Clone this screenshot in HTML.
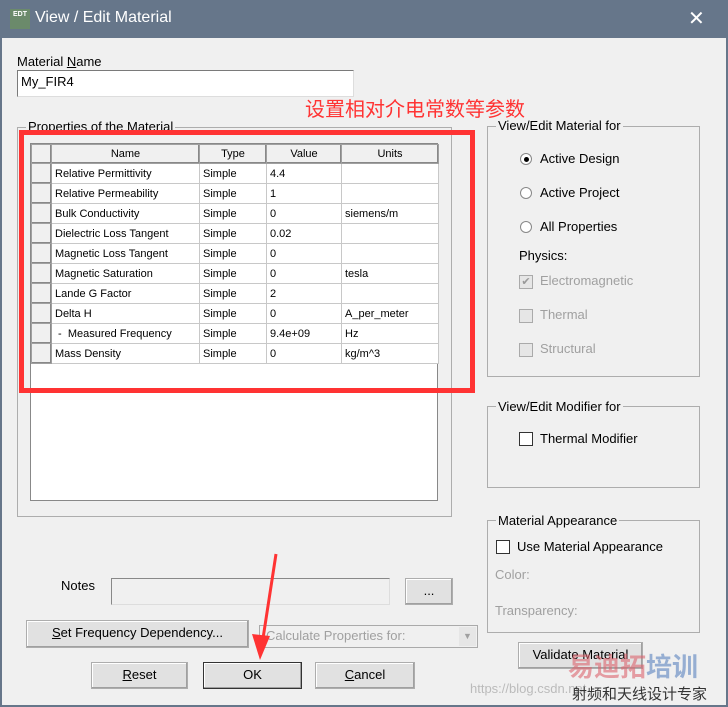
<!DOCTYPE html>
<html><head><meta charset="utf-8"><style>
*{box-sizing:border-box;margin:0;padding:0}
body{width:728px;height:707px;position:relative;background:#f0f0f0;font-family:"Liberation Sans","Noto Sans CJK SC",sans-serif;font-size:13px;color:#000;overflow:hidden}
.a{position:absolute}
#title{left:0;top:0;width:728px;height:38px;background:#66768a;color:#fff;font-size:16px}
#frame{left:0;top:38px;width:728px;height:669px;border:2px solid #66768a;border-top:none}
.grp{border:1px solid #adadad}
.lbl{background:#f0f0f0;padding:0 2px;white-space:nowrap}
.btn{background:#e1e1e1;border:1px solid #adadad;box-shadow:inset -1px -1px 0 #a0a0a0,inset 1px 1px 0 #fff;text-align:center;line-height:24px}
table{border-collapse:collapse;font-size:11px}
td{border:1px solid #c8c8c8;height:20px;padding:0 3px;background:#fff;white-space:nowrap}
th{font-weight:normal;background:#f0f0f0;border:1px solid #a0a0a0;box-shadow:inset -1px -1px 0 #888;height:19px}
td.s{background:#f0f0f0;border:1px solid #a0a0a0;box-shadow:inset -1px -1px 0 #888}
.rad{width:12px;height:12px;border:1px solid #888;border-radius:50%;background:#fff}
.chk{width:14px;height:14px;border:1px solid #333;background:#fff}
.dis{color:#a0a0a0}
</style></head><body>
<div id="title" class="a"><div class="a" style="left:10px;top:9px;width:20px;height:20px;background:#6b8a6b;color:#fff;font-size:7px;font-weight:bold;line-height:12px;text-align:center">EDT</div><div class="a" style="left:35px;top:9px">View / Edit Material</div>
<div class="a" style="left:688px;top:6px;font-size:20px">✕</div></div>
<div id="frame" class="a"></div>
<div class="a" style="left:17px;top:54px">Material <u>N</u>ame</div>
<div class="a" style="left:17px;top:70px;width:337px;height:27px;background:#fff;border:1px solid #7a7a7a;border-bottom-color:#ddd;border-right-color:#ddd;padding:3px 3px">My_FIR4</div>
<div class="a" style="left:305px;top:98px;color:#ff3333;font-size:20px;line-height:24px">设置相对介电常数等参数</div>
<div class="a grp" style="left:17px;top:127px;width:435px;height:390px"></div>
<div class="a lbl" style="left:26px;top:119px">Properties of the Material</div>
<div class="a" style="left:30px;top:143px;width:408px;height:358px;background:#fff;border:1px solid #888">
<table style="width:407px;table-layout:fixed">
<colgroup><col style="width:20px"><col style="width:148px"><col style="width:67px"><col style="width:75px"><col style="width:97px"></colgroup>
<tr><th></th><th>Name</th><th>Type</th><th>Value</th><th>Units</th></tr>
<tr><td class="s"></td><td>Relative Permittivity</td><td>Simple</td><td>4.4</td><td></td></tr>
<tr><td class="s"></td><td>Relative Permeability</td><td>Simple</td><td>1</td><td></td></tr>
<tr><td class="s"></td><td>Bulk Conductivity</td><td>Simple</td><td>0</td><td>siemens/m</td></tr>
<tr><td class="s"></td><td>Dielectric Loss Tangent</td><td>Simple</td><td>0.02</td><td></td></tr>
<tr><td class="s"></td><td>Magnetic Loss Tangent</td><td>Simple</td><td>0</td><td></td></tr>
<tr><td class="s"></td><td>Magnetic Saturation</td><td>Simple</td><td>0</td><td>tesla</td></tr>
<tr><td class="s"></td><td>Lande G Factor</td><td>Simple</td><td>2</td><td></td></tr>
<tr><td class="s"></td><td>Delta H</td><td>Simple</td><td>0</td><td>A_per_meter</td></tr>
<tr><td class="s"></td><td>&nbsp;-&nbsp; Measured Frequency</td><td>Simple</td><td>9.4e+09</td><td>Hz</td></tr>
<tr><td class="s"></td><td>Mass Density</td><td>Simple</td><td>0</td><td>kg/m^3</td></tr>
</table></div>
<div class="a" style="left:19px;top:130px;width:456px;height:263px;border:5px solid #ff3333"></div>

<div class="a grp" style="left:487px;top:126px;width:213px;height:251px"></div>
<div class="a lbl" style="left:496px;top:118px">View/Edit Material for</div>
<div class="a rad" style="left:520px;top:153px"><div class="a" style="left:3px;top:3px;width:5px;height:5px;border-radius:50%;background:#000"></div></div>
<div class="a" style="left:540px;top:151px">Active Design</div>
<div class="a rad" style="left:520px;top:187px"></div><div class="a" style="left:540px;top:185px">Active Project</div>
<div class="a rad" style="left:520px;top:221px"></div><div class="a" style="left:540px;top:219px">All Properties</div>
<div class="a" style="left:519px;top:248px">Physics:</div>
<div class="a chk" style="left:519px;top:275px;border-color:#aaa;background:#e6e6e6;color:#999;font-size:11px;line-height:12px;text-align:center">✔</div><div class="a dis" style="left:540px;top:273px">Electromagnetic</div>
<div class="a chk" style="left:519px;top:309px;border-color:#aaa;background:#e6e6e6"></div><div class="a dis" style="left:540px;top:307px">Thermal</div>
<div class="a chk" style="left:519px;top:343px;border-color:#aaa;background:#e6e6e6"></div><div class="a dis" style="left:540px;top:341px">Structural</div>

<div class="a grp" style="left:487px;top:406px;width:213px;height:82px"></div>
<div class="a lbl" style="left:496px;top:399px">View/Edit Modifier for</div>
<div class="a chk" style="left:519px;top:432px"></div><div class="a" style="left:540px;top:431px">Thermal Modifier</div>

<div class="a grp" style="left:487px;top:520px;width:213px;height:113px"></div>
<div class="a lbl" style="left:496px;top:513px">Material Appearance</div>
<div class="a chk" style="left:496px;top:540px"></div><div class="a" style="left:517px;top:539px">Use Material Appearance</div>
<div class="a dis" style="left:495px;top:567px">Color:</div>
<div class="a dis" style="left:495px;top:603px">Transparency:</div>

<div class="a" style="left:61px;top:578px">Notes</div>
<div class="a" style="left:111px;top:578px;width:279px;height:27px;border:1px solid #888;border-bottom-color:#ddd;border-right-color:#ddd"></div>
<div class="a btn" style="left:405px;top:578px;width:48px;height:27px">...</div>
<div class="a btn" style="left:26px;top:620px;width:223px;height:28px"><u>S</u>et Frequency Dependency...</div>
<div class="a" style="left:259px;top:625px;width:219px;height:23px;border:1px solid #aaa;color:#a0a0a0;padding:2px 6px">Calculate Properties for:<div class="a" style="right:1px;top:1px;width:17px;height:19px;background:#e6e6e6;font-size:9px;text-align:center;line-height:19px">▼</div></div>
<div class="a btn" style="left:91px;top:662px;width:97px;height:27px"><u>R</u>eset</div>
<div class="a btn" style="left:203px;top:662px;width:99px;height:27px;border:1px solid #333">OK</div>
<div class="a btn" style="left:315px;top:662px;width:100px;height:27px"><u>C</u>ancel</div>
<div class="a btn" style="left:518px;top:642px;width:125px;height:27px">Validate Material</div>
<div class="a" style="left:568px;top:647px;font-size:26px;font-weight:bold;color:rgba(220,100,110,.6)">易迪拓<span style="color:rgba(90,130,190,.6)">培训</span></div>
<div class="a" style="left:470px;top:681px;color:#bbb;font-size:13px">https://blog.csdn.net</div>
<div class="a" style="left:572px;top:683px;font-size:15px;color:#333">射频和天线设计专家</div>
<svg class="a" style="left:240px;top:550px" width="50" height="112"><line x1="36" y1="4" x2="22" y2="95" stroke="#ff3333" stroke-width="3"/><polygon points="12,84 20,110 30,86" fill="#ff3333"/></svg>
</body></html>
